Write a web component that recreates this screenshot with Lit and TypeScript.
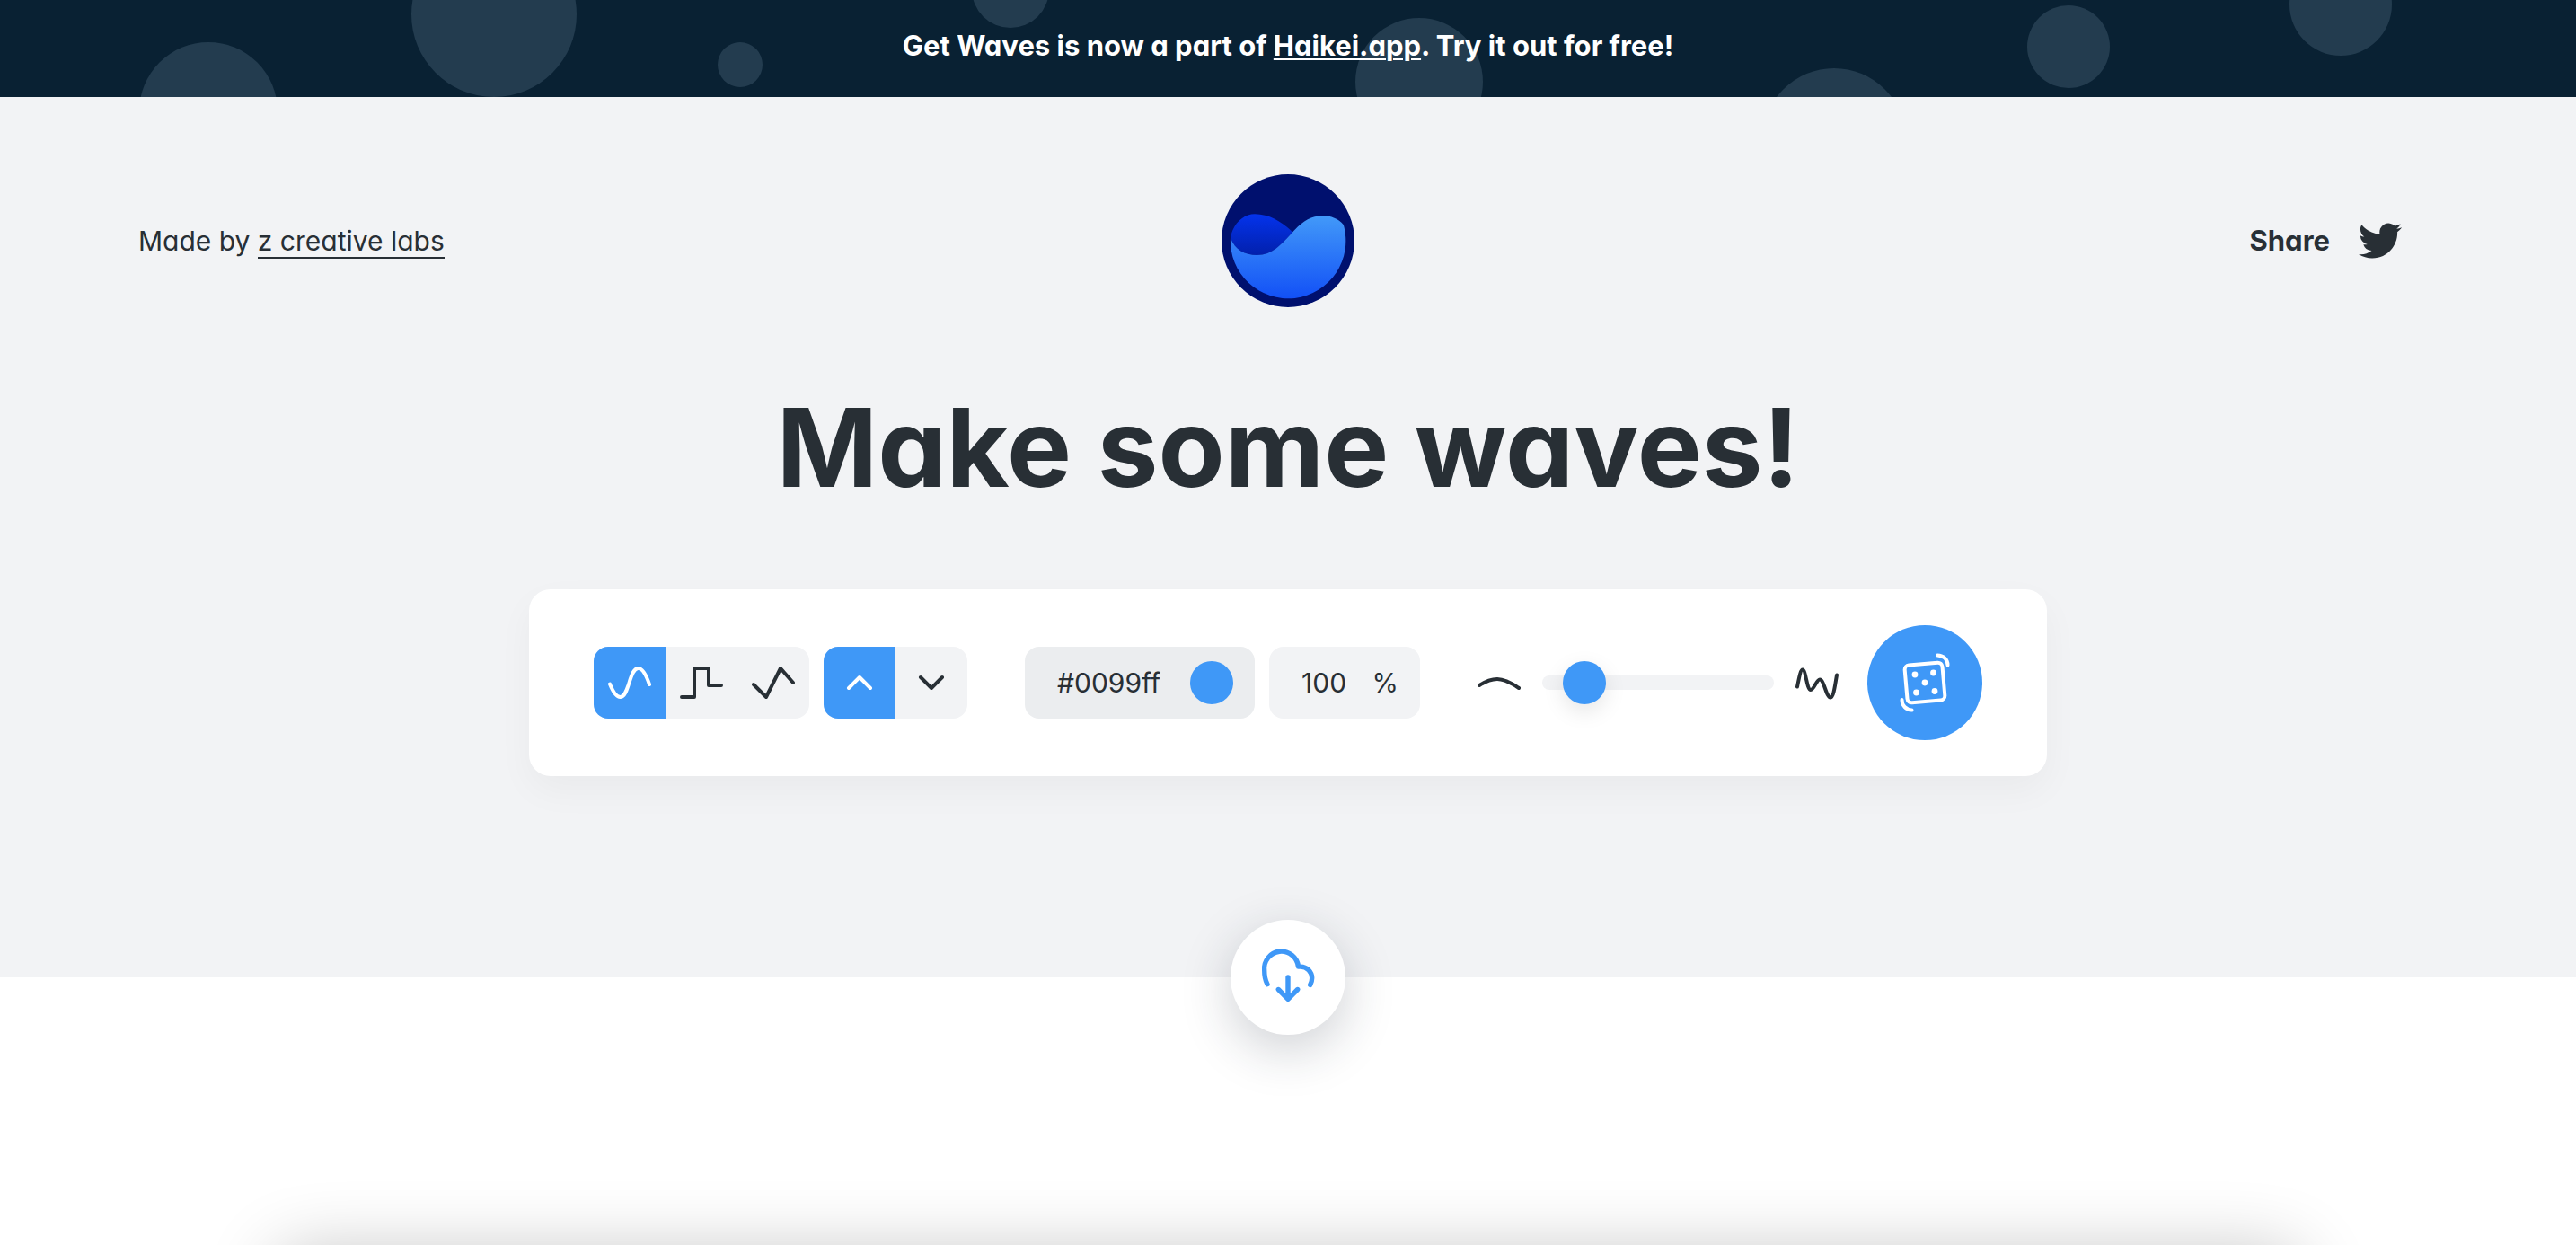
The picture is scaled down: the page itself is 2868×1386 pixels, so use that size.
import { LitElement, html, css, svg } from "lit";
import { customElement, state } from "lit/decorators.js";
import { classMap } from "lit/directives/class-map.js";

const bubbles = [
  [232, 124, 77],
  [550, 16, 92],
  [824, 72, 25],
  [1125, -12, 43],
  [1580, 91, 71],
  [2042, 156, 80],
  [2303, 52, 46],
  [2606, 5, 57],
];

const waveKinds = [
  { id: "smooth", label: "Smooth wave", d: "M2 25.5C6 35.5 10 40 13.5 40C23.5 40 23.5 8 33.5 8C38 8 42 14 46 26" },
  { id: "step", label: "Stepped wave", d: "M2 40H16V8H32V27H46" },
  { id: "peak", label: "Peaked wave", d: "M2 26L16 40L32 8L46 24" },
];

const directions = [
  { id: "up", label: "Wave up", d: "M12 30L24 18L36 30" },
  { id: "down", label: "Wave down", d: "M12 18L24 30L36 18" },
];

@customElement("app-root")
export class AppRoot extends LitElement {
  @state() private kind = "smooth";
  @state() private direction = "up";

  static styles = css`
    :host {
      --ink: #282f35;
      --blue: #3f98f7;
      --field: #f2f3f5;
      display: flex;
      flex-direction: column;
      height: 100vh;
      overflow: hidden;
      background: #fff;
      color: var(--ink);
      font-family: Inter, "Liberation Sans", sans-serif;
      font-feature-settings: "cv11";
      font-size: 30px;
      line-height: 40px;
    }
    * {
      box-sizing: border-box;
    }
    button,
    input {
      margin: 0;
      padding: 0;
      border: 0;
      background: none;
      color: inherit;
      font: inherit;
      font-feature-settings: inherit;
      outline: none;
    }
    button {
      display: grid;
      place-items: center;
      cursor: pointer;
    }
    svg {
      display: block;
      flex: none;
    }
    .line {
      fill: none;
      stroke: currentColor;
      stroke-width: 4;
      stroke-linecap: round;
      stroke-linejoin: round;
    }
    .banner {
      position: relative;
      flex: none;
      overflow: hidden;
      padding: 31px 24px 37px;
      background: #092133;
      color: #fff;
      font-size: 31px;
      font-weight: 700;
      text-align: center;
    }
    .bubbles {
      position: absolute;
      inset: 0;
      width: 100%;
      height: 100%;
      fill: #233c4f;
    }
    .banner-text {
      position: relative;
      margin: 0;
    }
    .banner-text a {
      color: inherit;
      text-decoration-thickness: 2px;
      text-underline-offset: 3px;
    }
    .hero {
      position: relative;
      z-index: 1;
      flex: none;
      padding: 86px 154px 224px;
      background: var(--field);
    }
    header {
      display: grid;
      grid-template-columns: 1fr auto 1fr;
      align-items: center;
    }
    .made {
      margin: 0;
    }
    .made a {
      color: inherit;
      text-decoration: none;
      border-bottom: 2px solid currentColor;
    }
    .share {
      display: flex;
      justify-self: end;
      align-items: center;
      gap: 32px;
      margin-right: 40px;
      color: inherit;
      font-size: 31px;
      font-weight: 700;
      text-decoration: none;
    }
    h1 {
      margin: 84px 0 86px;
      font-size: 121px;
      line-height: 144px;
      font-weight: 700;
      text-align: center;
    }
    .toolbar {
      display: flex;
      align-items: center;
      gap: 64px;
      max-width: 1690px;
      margin: 0 auto;
      padding: 40px 72px;
      border-radius: 24px;
      background: #fff;
      box-shadow: 0 16px 40px rgba(0, 0, 0, 0.04);
    }
    .set {
      display: flex;
      flex: none;
      gap: 16px;
    }
    .segments {
      display: flex;
      overflow: hidden;
      border-radius: 16px;
      background: var(--field);
    }
    .segment {
      width: 80px;
      height: 80px;
    }
    .segment.on {
      background: var(--blue);
      color: #fff;
    }
    .field {
      display: flex;
      align-items: center;
      width: 168px;
      height: 80px;
      padding: 0 24px 0 36px;
      border-radius: 16px;
      background: var(--field);
    }
    .field.colour {
      width: 256px;
      background: #ebedef;
    }
    .text {
      flex: 1;
      min-width: 0;
      height: 40px;
    }
    .swatch {
      appearance: none;
      width: 48px;
      height: 48px;
      cursor: pointer;
    }
    .swatch::-webkit-color-swatch-wrapper {
      padding: 0;
    }
    .swatch::-webkit-color-swatch {
      border: 0;
      border-radius: 50%;
    }
    .tuning {
      display: flex;
      flex: 1;
      align-items: center;
      gap: 32px;
      min-width: 0;
    }
    .slider {
      display: flex;
      flex: 1;
      align-items: center;
      gap: 24px;
      min-width: 0;
    }
    .range {
      appearance: none;
      flex: 1;
      min-width: 0;
      height: 48px;
    }
    .range::-webkit-slider-runnable-track {
      height: 16px;
      border-radius: 8px;
      background: var(--field);
    }
    .range::-webkit-slider-thumb {
      appearance: none;
      width: 48px;
      height: 48px;
      margin-top: -16px;
      border-radius: 50%;
      background: var(--blue);
      box-shadow: 0 8px 24px rgba(0, 0, 0, 0.1);
    }
    .round {
      width: 128px;
      height: 128px;
      border-radius: 50%;
    }
    .dice {
      flex: none;
      background: var(--blue);
      color: #fff;
    }
    .download {
      position: absolute;
      bottom: -64px;
      left: calc(50% - 64px);
      background: #fff;
      color: var(--blue);
      box-shadow: 0 16px 56px rgba(30, 40, 58, 0.22);
    }
    .stage {
      flex: 1;
      min-height: 0;
      padding: 307px 308px 0;
      overflow: hidden;
    }
    .preview {
      height: 640px;
      border-radius: 24px;
      background: #fff;
      box-shadow: 0 0 80px rgba(0, 0, 0, 0.24);
    }
  `;

  private icon(d: string) {
    return html`<svg class="line" width="48" height="48" viewBox="0 0 48 48" aria-hidden="true">
      <path d=${d} />
    </svg>`;
  }

  private segments(
    items: { id: string; label: string; d: string }[],
    active: string,
    pick: (id: string) => void
  ) {
    return html`<div class="segments">
      ${items.map(
        (item) => html`<button
          type="button"
          class=${classMap({ segment: true, on: item.id === active })}
          aria-label=${item.label}
          aria-pressed=${item.id === active ? "true" : "false"}
          @click=${() => pick(item.id)}
        >
          ${this.icon(item.d)}
        </button>`
      )}
    </div>`;
  }

  private logo() {
    return html`<svg width="148" height="148" viewBox="-74 -74 148 148" role="img" aria-label="Get Waves">
      <defs>
        <linearGradient id="front" x1="0" y1="0" x2="0" y2="1">
          <stop offset="0" stop-color="#4299f9" />
          <stop offset="1" stop-color="#1250f6" />
        </linearGradient>
        <linearGradient id="back" x1="0" y1="0" x2="0" y2="1">
          <stop offset="0" stop-color="#0433ec" />
          <stop offset="1" stop-color="#0220ac" />
        </linearGradient>
      </defs>
      <circle r="74" fill="#00106e" />
      <path
        fill="url(#back)"
        d="M-64 -3C-62 -18 -50 -29.7 -37 -29.7C-20 -29.7 -6 -20 5.3 -9.7C-8 4.5 -17 16 -34.7 16C-48 16 -59 10 -64 -3Z"
      />
      <path
        fill="url(#front)"
        d="M-64 -3C-59 10 -48 16 -34.7 16C-17 16 -8 4.5 5.3 -9.7C16 -21.5 25 -27.7 38.7 -27.7C48 -27.7 56 -24.5 61.8 -17.7A64.2 64.2 0 1 1 -64 -3Z"
      />
    </svg>`;
  }

  render() {
    return html`
      <div class="banner">
        <svg class="bubbles" viewBox="0 0 2868 108" preserveAspectRatio="xMidYMid slice" aria-hidden="true">
          ${bubbles.map(([x, y, r]) => svg`<circle cx=${x} cy=${y} r=${r} />`)}
        </svg>
        <p class="banner-text">Get Waves is now a part of <a href="#haikei">Haikei.app</a>. Try it out for free!</p>
      </div>

      <section class="hero">
        <header>
          <p class="made">Made by <a href="#labs">z creative labs</a></p>
          ${this.logo()}
          <a class="share" href="#share">
            <span>Share</span>
            <svg width="48" height="48" viewBox="0 0 24 24" fill="currentColor" aria-hidden="true">
              <path
                d="M23.953 4.57a10 10 0 01-2.825.775 4.958 4.958 0 002.163-2.723c-.951.555-2.005.959-3.127 1.184a4.92 4.92 0 00-8.384 4.482C7.69 8.095 4.067 6.13 1.64 3.162a4.822 4.822 0 00-.666 2.475c0 1.71.87 3.213 2.188 4.096a4.904 4.904 0 01-2.228-.616v.06a4.923 4.923 0 003.946 4.827 4.996 4.996 0 01-2.212.085 4.936 4.936 0 004.604 3.417 9.867 9.867 0 01-6.102 2.105c-.39 0-.779-.023-1.17-.067a13.995 13.995 0 007.557 2.209c9.053 0 13.998-7.496 13.998-13.985 0-.21 0-.42-.015-.63A9.935 9.935 0 0024 4.59z"
              />
            </svg>
          </a>
        </header>

        <h1>Make some waves!</h1>

        <div class="toolbar">
          <div class="set">
            ${this.segments(waveKinds, this.kind, (id) => (this.kind = id))}
            ${this.segments(directions, this.direction, (id) => (this.direction = id))}
          </div>
          <div class="set">
            <div class="field colour">
              <input class="text" type="text" value="#0099ff" aria-label="Wave colour code" />
              <input class="swatch" type="color" value="#3f98f7" aria-label="Pick wave colour" />
            </div>
            <div class="field">
              <input class="text" id="opacity" type="text" value="100" aria-label="Opacity" />
              <label for="opacity">%</label>
            </div>
          </div>
          <div class="tuning">
            <div class="slider">
              ${this.icon("M2 27C9 22.5 16 20 22 20C30 20 38 24.5 46 30")}
              <input class="range" type="range" min="1" max="10" value="2" aria-label="Complexity" />
              ${this.icon(
                "M2 28.5C4 19 5.5 9.5 8 9.5C11.5 9.5 12.5 32 17 32C20.5 32 23.5 20.5 27 20.5C32 20.5 34 40.5 39 40.5C42.5 40.5 44 27 46 15.5"
              )}
            </div>
            <button type="button" class="round dice" aria-label="Randomize">
              <svg width="72" height="72" viewBox="-36 -36 72 72" aria-hidden="true">
                <g class="line">
                  <rect x="-21" y="-21" width="42" height="42" rx="5" transform="rotate(-5)" />
                  <path d="M14 -30.5C20.5 -30.5 25.5 -26 25.5 -19.5M-25.5 19C-25.5 25.5 -21 30 -14.5 30.5" />
                </g>
                <g fill="currentColor">
                  <circle cx="-11" cy="-9" r="3.4" />
                  <circle cx="9.5" cy="-11" r="3.4" />
                  <circle r="3.4" />
                  <circle cx="-9.5" cy="11" r="3.4" />
                  <circle cx="11" cy="9.5" r="3.4" />
                </g>
              </svg>
            </button>
          </div>
        </div>

        <button type="button" class="round download" aria-label="Download wave">
          <svg width="72" height="72" viewBox="-36 -36 72 72" aria-hidden="true">
            <path
              fill="none"
              stroke="currentColor"
              stroke-width="5.4"
              stroke-linecap="round"
              stroke-linejoin="round"
              d="M-23 7.7C-25.3 3.5 -26.3 -1 -26.3 -7.7A19 19 0 0 1 11.5 -11.9H14A12.7 12.7 0 0 1 26.7 0.8C26.7 3.5 26 6 24.7 8.3M0 0V24.3M-10.7 13.5L0 24.3L10.7 13.5"
            />
          </svg>
        </button>
      </section>

      <main class="stage">
        <div class="preview"></div>
      </main>
    `;
  }
}
